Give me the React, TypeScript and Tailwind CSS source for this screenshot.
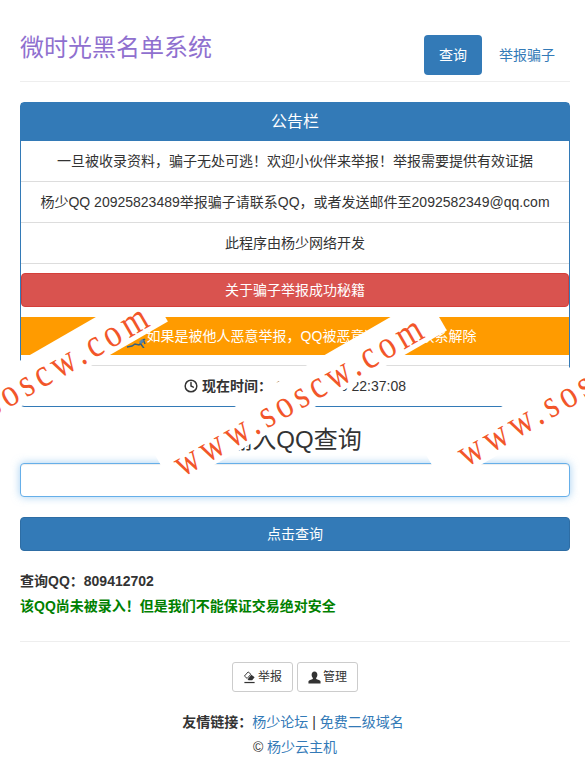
import { Clock } from 'lucide-react';

const sans = { fontFamily: '"Liberation Sans", "Noto Sans CJK SC", sans-serif' };

// full-width punctuation
const COMMA = '\uFF0C';
const BANG = '\uFF01';
const COLON = '\uFF1A';

function Watermark({ className, textClass }: { className: string; textClass: string }) {
    return (
        <div className={`absolute z-10 flex h-[40px] w-[315px] rotate-[-30deg] items-center justify-center bg-white ${className}`}>
            <span className={`translate-y-[2px] scale-y-[1.2] whitespace-nowrap font-['Liberation_Serif',serif] text-[33px] leading-none tracking-[5px] text-[#f2562a] ${textClass}`}>
                www.soscw.com
            </span>
        </div>
    );
}

function EraseIcon() {
    return (
        <svg viewBox="0 0 14 14" className="h-[14px] w-[13px]" fill="#333">
            <path d="M1.500 6 5.500 1.500l3 2.500-4 4.500z" fill="#fff" stroke="#333" strokeWidth="1" />
            <path d="M5 9.500 9 4.500l3.500 2.800-2.600 3.200H6z" />
            <rect x="1.500" y="12.300" width="11" height="1.300" />
        </svg>
    );
}

function UserIcon() {
    return (
        <svg viewBox="0 0 14 14" className="h-[13px] w-[13px]" fill="#333">
            <path d="M7 .5c2 0 3.100 1.500 3.100 3.500 0 1.400-.5 2.700-1.300 3.500v1.200c1.800.6 4.200 1.300 4.700 2.300v2.500H.5V11c.5-1 2.900-1.700 4.700-2.300V7.500C4.400 6.700 3.900 5.400 3.900 4 3.900 2 5 .5 7 .5z" />
        </svg>
    );
}

export default function App() {
    return (
        <div className="relative h-[782px] w-[585px] overflow-hidden bg-white pr-[15px] pl-[20px] text-[14px] text-[#333]" style={sans}>
            {/* Header */}
            <div className="flex items-start justify-between border-b border-[#eee] pt-[35px] pb-[6px]">
                <h3 className="text-[24px] leading-[26px] text-[#8f70cf]">微时光黑名单系统</h3>
                <div className="flex gap-[2px]">
                    <a className="rounded bg-[#337ab7] px-[15px] py-[10px] leading-[20px] text-white">查询</a>
                    <a className="px-[15px] py-[10px] leading-[20px] text-[#337ab7]">举报骗子</a>
                </div>
            </div>

            {/* Notice panel */}
            <div className="mt-[20px] rounded border border-[#337ab7] text-center">
                <div className="bg-[#337ab7] py-[9px] text-[16px] leading-[20px] text-white">公告栏</div>
                <div className="border-b border-[#ddd] px-[15px] py-[10px] leading-[20px]">一旦被收录资料{COMMA}骗子无处可逃{BANG}欢迎小伙伴来举报{BANG}举报需要提供有效证据</div>
                <div className="border-b border-[#ddd] py-[10px] leading-[20px] whitespace-nowrap">杨少QQ 20925823489举报骗子请联系QQ{COMMA}或者发送邮件至2092582349@qq.com</div>
                <div className="border-b border-[#ddd] px-[15px] py-[10px] leading-[20px]">此程序由杨少网络开发</div>
                <a className="relative z-20 mt-[9px] block rounded border border-[#d43f3a] bg-[#d9534f] py-[6px] leading-[20px] text-white">关于骗子举报成功秘籍</a>
                <div className="mt-[10px] flex h-[38px] items-center justify-center bg-[#ff9b00] text-white">
                    <svg viewBox="0 0 33 24" className="h-[24px] w-[33px]" fill="none" stroke="#2f5f86" strokeWidth="1.500">
                        <path d="M13 23l5-1 3-2 4 1 4-4 2-2M26 19l3 4 1 1M29 15l2 5" />
                        <path d="M25 18l3-3 2 2-3 3z" fill="#5b86ad" stroke="none" />
                    </svg>
                    <span>如果是被他人恶意举报{COMMA}QQ被恶意冻结{COMMA}请联系解除</span>
                </div>
                <div className="mt-[10px] flex items-center justify-center gap-[4px] border-t border-[#ddd] px-[15px] py-[10px] leading-[20px]">
                    <Clock className="h-[14px] w-[14px]" strokeWidth={2.5} />
                    <b>现在时间{COLON}</b>
                    <span>2020-05-06 22:37:08</span>
                </div>
            </div>

            {/* Query form */}
            <h3 className="mt-[20px] text-center text-[24px] leading-[26px]">输入QQ查询</h3>
            <input className="mt-[10px] block h-[34px] w-full rounded border border-[#66afe9] bg-white px-[12px] shadow-[inset_0_1px_1px_rgba(0,0,0,0.075),0_0_8px_rgba(102,175,233,0.6)] outline-none" />
            <button className="mt-[20px] block h-[34px] w-full rounded border border-[#2e6da4] bg-[#337ab7] text-white">点击查询</button>

            <div className="mt-[20px] font-bold leading-[20px]">查询QQ{COLON}809412702</div>
            <div className="mt-[5px] font-bold leading-[20px] text-[#008000]">该QQ尚未被录入{BANG}但是我们不能保证交易绝对安全</div>

            <div className="mt-[25px] border-t border-[#eee]" />

            {/* Footer */}
            <div className="mt-[20px] flex justify-center gap-[4px] text-[12px]">
                <a className="flex h-[30px] w-[61px] items-center justify-center gap-[2px] rounded-[3px] border border-[#ccc]"><EraseIcon />举报</a>
                <a className="flex h-[30px] w-[61px] items-center justify-center gap-[2px] rounded-[3px] border border-[#ccc]"><UserIcon />管理</a>
            </div>
            <div className="mt-[20px] mr-[4px] text-center leading-[20px]">
                <b>友情链接{COLON}</b><span className="text-[#337ab7]">杨少论坛</span> | <span className="text-[#337ab7]">免费二级域名</span>
            </div>
            <div className="mt-[5px] text-center leading-[20px]">© <span className="text-[#337ab7]">杨少云主机</span></div>

            {/* Watermark strips over the page */}
            <Watermark className="left-[-136px] top-[363px]" textClass="translate-x-[3px]" />
            <Watermark className="left-[143px] top-[372px]" textClass="translate-x-[-2px]" />
            <Watermark className="left-[413px] top-[370px]" textClass="translate-x-[14px]" />
        </div>
    );
}
